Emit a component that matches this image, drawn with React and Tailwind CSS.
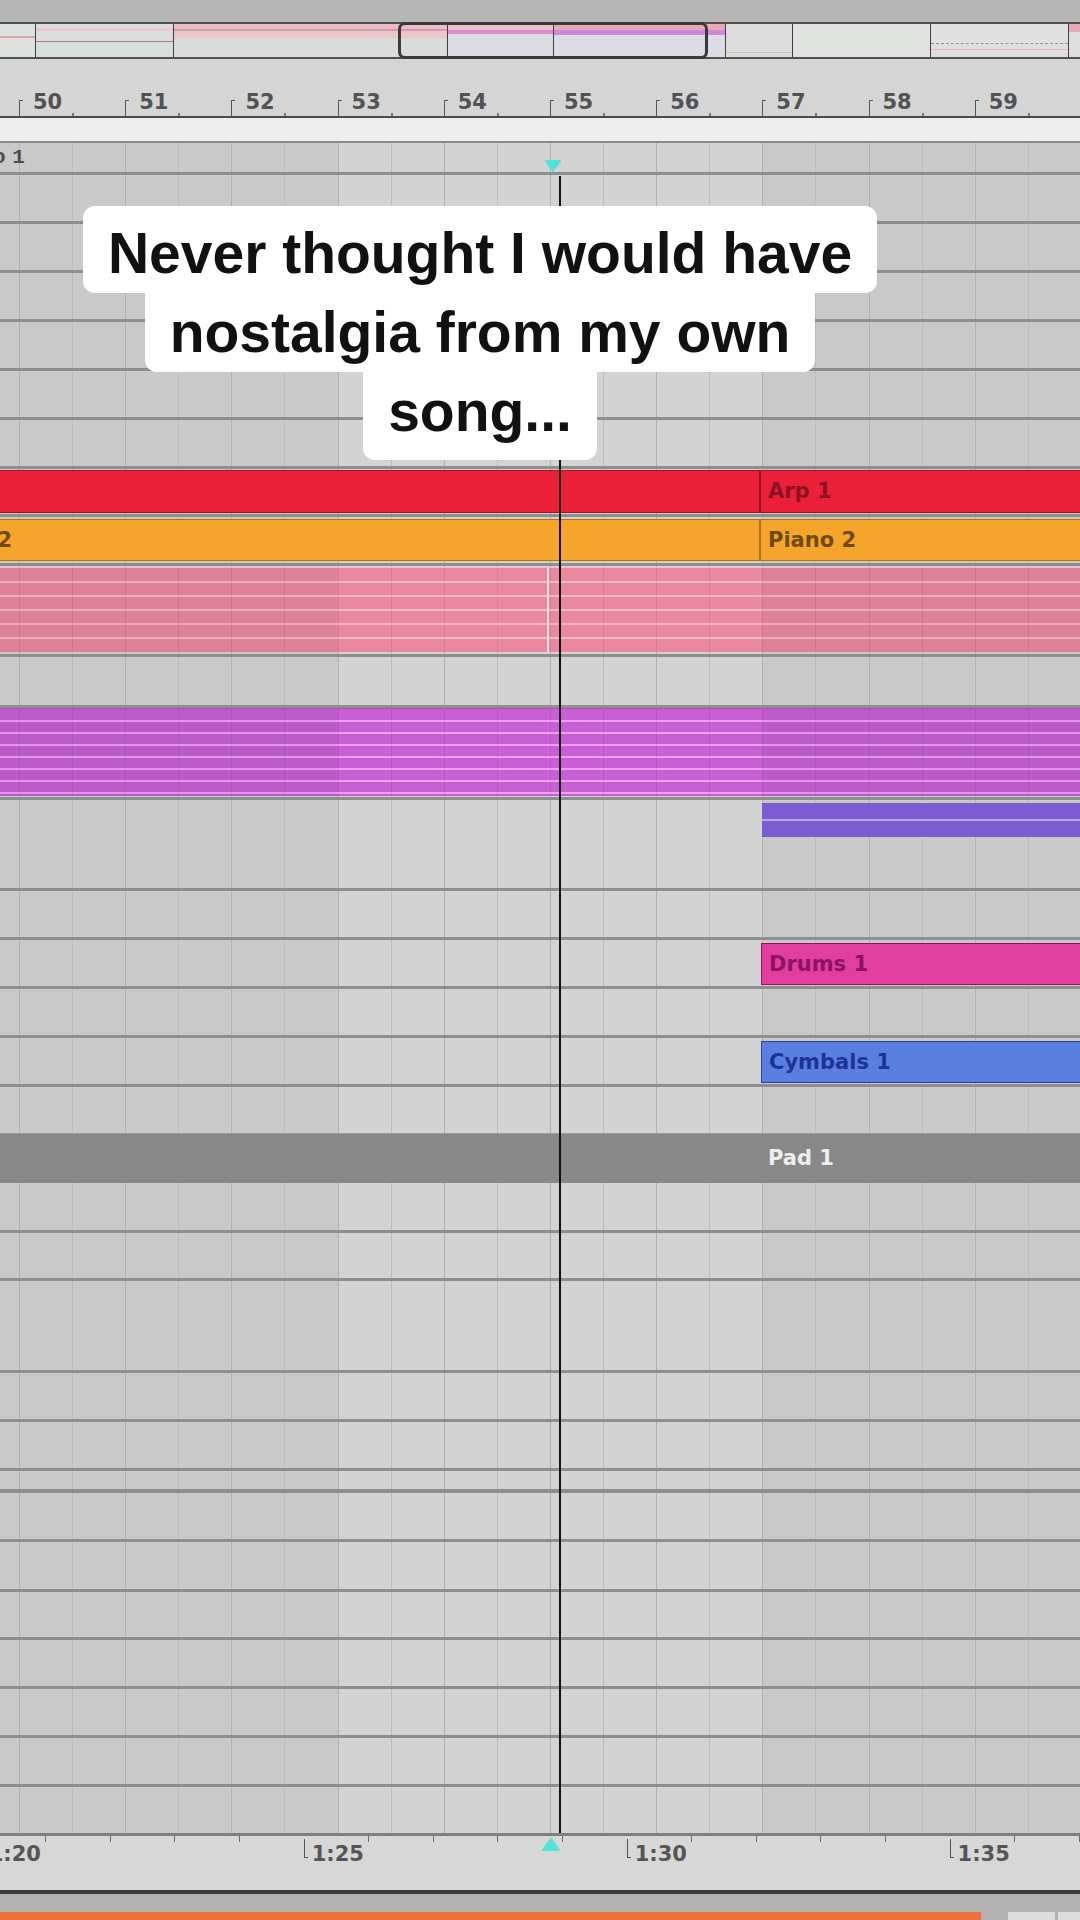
import React from 'react';

// half-bar grid: bar 50 sits at x=19, one bar is 106.2px wide
const halfBars = Array.from({ length: 22 }, (_, i) => i - 1);
const bars = [50, 51, 52, 53, 54, 55, 56, 57, 58, 59];
const seconds = Array.from({ length: 18 }, (_, i) => i);

function TrackGrid() {
  return (
    <div className="absolute inset-0 flex -ml-[34.1px]">
      {halfBars.map((k) => {
        const light = k >= 6 && k <= 13;
        const onBar = k % 2 === 0;
        return (
          <div
            key={k}
            className={`h-full w-[53.1px] shrink-0 border-l ${light ? 'bg-[#d3d3d3]' : 'bg-[#c9c9c9]'} ${
              onBar ? 'border-[#b1b1b1]' : 'border-[#bcbcbc]'
            }`}
          />
        );
      })}
    </div>
  );
}

// darkening + faint grid seen through the note clips
function ClipShade() {
  return (
    <div className="pointer-events-none absolute inset-0 flex -ml-[34.1px]">
      {halfBars.map((k) => {
        const light = k >= 6 && k <= 13;
        return (
          <div
            key={k}
            className={`h-full w-[53.1px] shrink-0 border-l border-black/[0.07] ${light ? '' : 'bg-black/[0.05]'}`}
          />
        );
      })}
    </div>
  );
}

function Lane({ className, line = 'h-[3px]', children }) {
  return (
    <div className={`relative flex flex-col ${className}`}>
      <div className="relative min-h-0 flex-1">{children}</div>
      {line && <div className={`${line} shrink-0 bg-[#8e8e8e]`} />}
    </div>
  );
}

function Notes({ count, className, stripe }) {
  return (
    <div className={`flex flex-col ${className}`}>
      {Array.from({ length: count }, (_, i) => (
        <div key={i} className={`h-[2px] ${stripe}`} />
      ))}
    </div>
  );
}

function ClipLabel({ children, className }) {
  return (
    <span className={`whitespace-nowrap font-['DejaVu_Sans',sans-serif] text-[21px] font-bold leading-none ${className}`}>
      {children}
    </span>
  );
}

function Overview() {
  return (
    <div className="relative flex h-[37px] shrink-0 border-y-2 border-[#4f4f4f]">
      <div className="flex w-[36px] shrink-0 flex-col border-r border-[#3f3f3f] bg-[#dde2df]">
        <div className="mt-[12px] h-[2px] bg-[#dba2b4]" />
      </div>
      <div className="flex w-[138px] shrink-0 flex-col border-r border-[#3f3f3f] bg-[#d8dfda]">
        <div className="mt-[4px] h-[3px] bg-[#ebc6cf]" />
        <div className="mt-[10px] h-px bg-[#b07892]" />
      </div>
      <div className="flex w-[274px] shrink-0 flex-col border-r border-[#3f3f3f] bg-[#dadcdc]">
        <div className="h-[5px] bg-[#e8bfc8]" />
        <div className="h-[2px] bg-[#d799aa]" />
        <div className="h-[7px] bg-[#e9c5cc]" />
      </div>
      <div className="flex w-[106px] shrink-0 flex-col border-r border-[#3f3f3f] bg-[#dcdde2]">
        <div className="h-[6px] bg-[#ebbfcb]" />
        <div className="h-[4px] bg-[#d890cf]" />
      </div>
      <div className="flex w-[172px] shrink-0 flex-col border-r border-[#3f3f3f] bg-[#dddbe6]">
        <div className="h-[6px] bg-[#eaa7b9]" />
        <div className="h-[5px] bg-[#c98ad8]" />
      </div>
      <div className="flex w-[67px] shrink-0 flex-col justify-end border-r border-[#3f3f3f] bg-[#dcdcdc]">
        <div className="mb-[4px] h-px bg-[#c4c4c4]" />
      </div>
      <div className="w-[138px] shrink-0 border-r border-[#3f3f3f] bg-[#dfe2df]" />
      <div className="flex w-[138px] shrink-0 flex-col border-r border-[#3f3f3f] bg-[#e0e0e0]">
        <div className="mt-[19px] border-t border-dashed border-[#b4829a]" />
        <div className="mt-[5px] h-px bg-[#e6b9c6]" />
      </div>
      <div className="flex flex-1 flex-col bg-[#dedede]">
        <div className="h-[8px] bg-[#e9a9ba]" />
      </div>
      <div className="absolute left-[398px] top-[-2px] h-[37px] w-[310px] rounded-[7px] border-[3px] border-[#3a3a3a]" />
    </div>
  );
}

function BarRuler() {
  return (
    <div className="flex h-[57px] shrink-0 items-end bg-[#d5d5d5] pl-[19px] font-['DejaVu_Sans',sans-serif] text-[#525252]">
      {bars.map((n) => (
        <div key={n} className="flex w-[106.2px] shrink-0 items-end">
          <div className="flex w-[53.1px] shrink-0 items-end">
            <div className="h-[16px] w-[4px] shrink-0 border-l border-t border-[#555]" />
            <span className="mb-[3px] ml-[10px] text-[21px] font-bold leading-none">{n}</span>
          </div>
          <div className="h-[3px] w-[2px] bg-[#777]" />
        </div>
      ))}
    </div>
  );
}

function TimeRuler() {
  return (
    <div className="flex h-[54px] shrink-0 bg-[#d7d7d7] -ml-[19.3px] font-['DejaVu_Sans',sans-serif] text-[#555]">
      {seconds.map((i) => (
        <div key={i} className="flex w-[64.6px] shrink-0 items-start">
          {i % 5 === 0 ? (
            <>
              <div className="mt-[3px] h-[19px] w-[4px] shrink-0 border-b border-l border-[#555]" />
              <span className="ml-[4px] mt-[8px] text-[21px] font-bold leading-none">{`1:${20 + i}`}</span>
            </>
          ) : (
            <div className="h-[6px] w-px bg-[#6a6a6a]" />
          )}
        </div>
      ))}
    </div>
  );
}

function Arrangement() {
  return (
    <div className="relative h-[1690px] shrink-0 overflow-hidden">
      <TrackGrid />
      <div className="relative flex flex-col">
        <Lane className="h-[32px]">
          <div className="flex h-full items-center">
            <span className="-ml-[7px] font-['Liberation_Mono',monospace] text-[21px] font-bold leading-none tracking-[-3px] text-[#4d4d4d]">
              o 1
            </span>
          </div>
        </Lane>
        <Lane className="h-[49px]" />
        <Lane className="h-[49px]" />
        <Lane className="h-[49px]" />
        <Lane className="h-[49px]" />
        <Lane className="h-[49px]" />
        <Lane className="h-[49px]" />

        {/* Arp */}
        <Lane className="h-[48px]">
          <div className="pt-[1px]">
            <div className="flex h-[43px] border-y border-[#9a1424] bg-[#ea2039]">
              <div className="w-[761px] shrink-0 border-r-2 border-[#9a1424]" />
              <div className="flex flex-1 items-center pl-[7px]">
                <ClipLabel className="text-[#8e1121]">Arp 1</ClipLabel>
              </div>
            </div>
          </div>
        </Lane>

        {/* Piano */}
        <Lane className="h-[49px]">
          <div className="pt-[2px]">
            <div className="flex h-[42px] overflow-hidden border-y border-[#b07418] bg-[#f6a52c]">
              <div className="flex w-[761px] shrink-0 items-center border-r-2 border-[#b07418]">
                <ClipLabel className="-ml-[76px] text-[#6f4b10]">Piano 2</ClipLabel>
              </div>
              <div className="flex flex-1 items-center pl-[7px]">
                <ClipLabel className="text-[#6f4b10]">Piano 2</ClipLabel>
              </div>
            </div>
          </div>
        </Lane>

        {/* pink notes */}
        <Lane className="h-[91px]">
          <div className="pt-[1px]">
            <div className="relative flex h-[85px] border-t border-[#f3bccb] bg-[#ea88a1]">
              <div className="w-[549px] shrink-0 border-r-2 border-[#f7e2e8]">
                <Notes count={5} className="gap-[12px] pt-[13px]" stripe="bg-[#f7b8c7]" />
              </div>
              <div className="flex-1">
                <Notes count={5} className="gap-[12px] pt-[13px]" stripe="bg-[#f7b8c7]" />
              </div>
              <ClipShade />
            </div>
          </div>
        </Lane>

        <Lane className="h-[51px]" />

        {/* purple notes */}
        <Lane className="h-[92px]">
          <div className="relative h-[88px] border-t border-[#b24cbf] bg-[#c85fd4]">
            <Notes count={7} className="gap-[10px] pt-[11px]" stripe="bg-[#eaa2f1]" />
            <ClipShade />
          </div>
        </Lane>

        <Lane className="h-[91px]">
          <div className="pt-[3px]">
            <div className="ml-[762px] flex h-[34px] flex-col bg-[#7b5cd3]">
              <div className="h-[16px]" />
              <div className="h-[2px] bg-[#b9a6ec]" />
            </div>
          </div>
        </Lane>

        <Lane className="h-[49px]" />

        {/* Drums */}
        <Lane className="h-[49px]">
          <div className="pt-[3px]">
            <div className="ml-[761px] flex h-[42px] items-center border border-r-0 border-[#8d175f] bg-[#e13ea0] pl-[7px]">
              <ClipLabel className="text-[#8b135f]">Drums 1</ClipLabel>
            </div>
          </div>
        </Lane>

        <Lane className="h-[49px]" />

        {/* Cymbals */}
        <Lane className="h-[49px]">
          <div className="pt-[3px]">
            <div className="ml-[761px] flex h-[42px] items-center border border-r-0 border-[#2b3f94] bg-[#5a7fe1] pl-[7px]">
              <ClipLabel className="text-[#1d3496]">Cymbals 1</ClipLabel>
            </div>
          </div>
        </Lane>

        <Lane className="h-[46px]" line={null} />

        {/* Pad */}
        <div className="flex h-[50px] items-center border-t border-[#9a9a9a] bg-[#888888] pl-[768px]">
          <ClipLabel className="text-[#eeeeee]">Pad 1</ClipLabel>
        </div>

        <Lane className="h-[50px]" />
        <Lane className="h-[48px]" />
        <Lane className="h-[92px]" />
        <Lane className="h-[49px]" />
        <Lane className="h-[49px]" />
        <Lane className="h-[22px]" line="h-[4px]" />
        <Lane className="h-[49px]" />
        <Lane className="h-[50px]" />
        <Lane className="h-[48px]" />
        <Lane className="h-[49px]" />
        <Lane className="h-[49px]" />
        <Lane className="h-[49px]" />
        <Lane className="h-[46px]" line={null} />
      </div>
    </div>
  );
}

export default function App() {
  return (
    <div className="relative flex h-[1920px] w-[1080px] flex-col overflow-hidden bg-[#c9c9c9]">
      <div className="h-[22px] shrink-0 bg-[#b6b6b6]" />
      <Overview />
      <BarRuler />
      <div className="h-[2px] shrink-0 bg-[#4a4a4a]" />
      <div className="h-[23px] shrink-0 bg-[#eeeeee]" />
      <div className="h-[2px] shrink-0 bg-[#8a8a8a]" />
      <Arrangement />
      <div className="h-[3px] shrink-0 bg-[#7f7f7f]" />
      <TimeRuler />
      <div className="h-[4px] shrink-0 bg-[#3b3b3b]" />
      <div className="h-[18px] shrink-0 bg-[#b2b2b2]" />
      <div className="flex h-[8px] shrink-0 bg-[#b2b2b2]">
        <div className="w-[981px] shrink-0 bg-[#ee703d]" />
        <div className="ml-[27px] w-[47px] shrink-0 bg-[#dcdcdc]" />
        <div className="ml-[3px] flex-1 bg-[#dcdcdc]" />
      </div>

      {/* playhead and its markers */}
      <div className="absolute left-[559px] top-[176px] h-[1657px] w-[2px] bg-[#111]" />
      <svg className="absolute left-[545px] top-[160px]" width="16" height="12" viewBox="0 0 16 12">
        <path d="M1 1 H15 L8 11 Z" fill="#4fe3da" stroke="#4fe3da" strokeLinejoin="round" strokeWidth="2" />
      </svg>
      <svg className="absolute left-[542px] top-[1838px]" width="18" height="13" viewBox="0 0 18 13">
        <path d="M9 1 L17 12 H1 Z" fill="#4fe3da" stroke="#4fe3da" strokeLinejoin="round" strokeWidth="2" />
      </svg>

      {/* caption: one white box per line, joined like a sticker */}
      <div className="absolute left-0 top-[206px] flex w-[960px] flex-col items-center font-['Liberation_Sans',Arial,sans-serif] text-[57px] font-bold leading-[79px] text-[#111]">
        <div className="whitespace-nowrap rounded-[12px] bg-white px-[25px] pt-[8px]">Never thought I would have</div>
        <div className="whitespace-nowrap rounded-b-[12px] bg-white px-[25px]">nostalgia from my own</div>
        <div className="whitespace-nowrap rounded-b-[12px] bg-white px-[25px] pb-[9px]">song...</div>
      </div>
    </div>
  );
}
